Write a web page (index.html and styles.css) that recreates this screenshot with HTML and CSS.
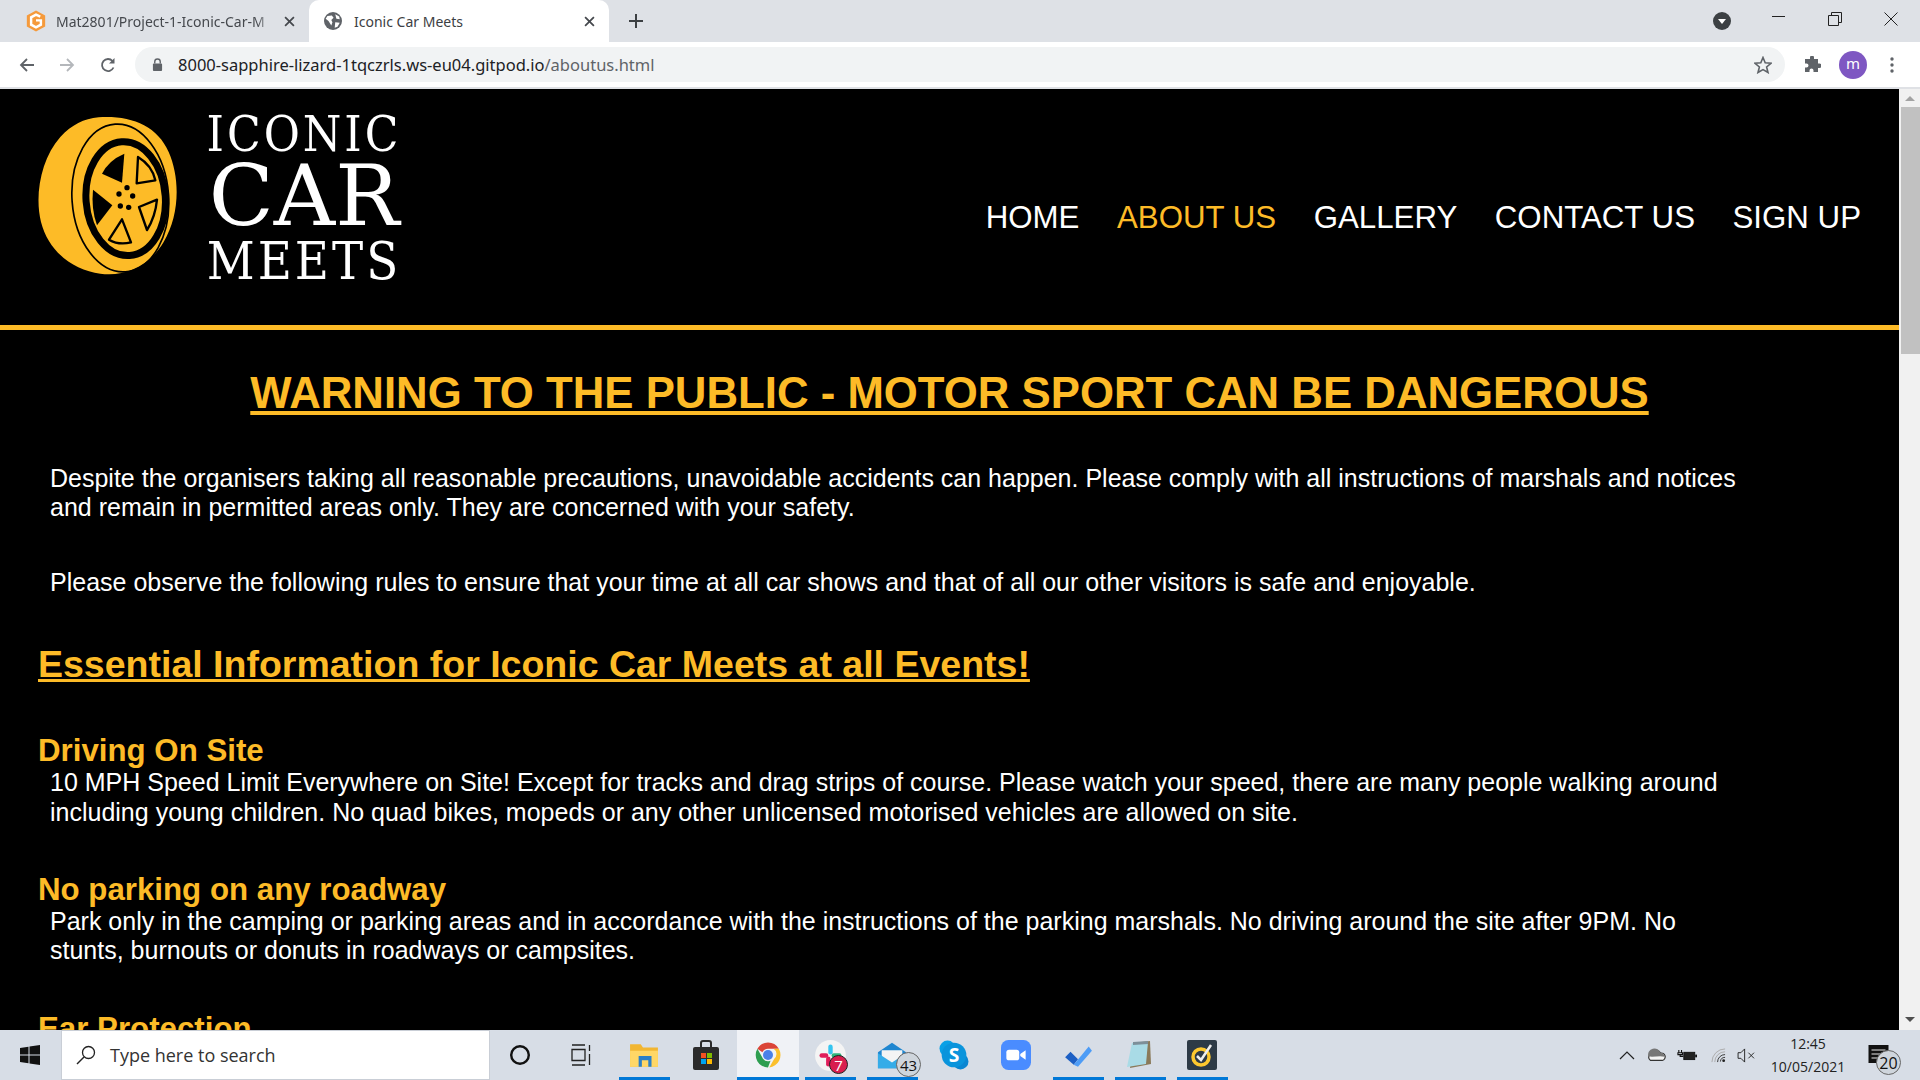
FILE: index.html
```html
<!DOCTYPE html>
<html lang="en">
  <head>
    <meta charset="UTF-8" />
    <meta name="viewport" content="width=device-width, initial-scale=1.0" />
    <title>Iconic Car Meets</title>
    <link rel="stylesheet" href="styles.css">
  </head>
  <body>
    <div class="tabstrip">
      <div class="tab">
        <svg class="favicon favicon-g" viewBox="0 0 16 18"><path d="M8 0.5 15.500 4.500V13.500L8 17.500 0.500 13.500V4.500Z" fill="#f59a3c"/><path d="M11.500 5.500 8 3.800 4 6V12L8 14.200 12 12V8.500H8" fill="none" stroke="#fff" stroke-width="2"/></svg>
        <span class="tab-title">Mat2801/Project-1-Iconic-Car-M</span>
        <svg class="tab-close" viewBox="0 0 10 10"><path d="M1 1 9 9M9 1 1 9" stroke="#45484d" stroke-width="1.6"/></svg>
      </div>
      <div class="tab tab-active">
        <svg class="favicon" viewBox="0 0 16 16"><circle cx="8" cy="8" r="8" fill="#5f6368"/><path d="M3 3.500 7 3 8.500 5 6.500 7 7.500 9 6.500 12 4 8 1.500 6ZM10 2 13.500 4 14 6.500 11 6ZM10 9 14 9.500 12 13 9.500 14Z" fill="#fff"/></svg>
        <span class="tab-title">Iconic Car Meets</span>
        <svg class="tab-close" viewBox="0 0 10 10"><path d="M1 1 9 9M9 1 1 9" stroke="#45484d" stroke-width="1.6"/></svg>
      </div>
      <svg class="new-tab" viewBox="0 0 14 14"><path d="M7 0V14M0 7H14" stroke="#3c4043" stroke-width="2"/></svg>
      <div class="strip-right">
        <svg class="tab-search" viewBox="0 0 18 18"><circle cx="9" cy="9" r="9" fill="#3c4043"/><path d="M5 7H13L9 12Z" fill="#fff"/></svg>
        <svg class="win-btn" viewBox="0 0 14 14"><path d="M0 4.500H13" stroke="#222" stroke-width="1"/></svg>
        <svg class="win-btn" viewBox="0 0 14 14"><path d="M.5 3.500H10.500V13.500H.5ZM3.500 3.500V.5H13.500V10.500H10.500" fill="none" stroke="#222"/></svg>
        <svg class="win-btn" viewBox="0 0 14 14"><path d="M.5 .5 13.500 13.500M13.500 .5 .5 13.500" stroke="#222"/></svg>
      </div>
    </div>

    <div class="toolbar">
      <svg class="tool-icon" viewBox="0 0 16 16"><path d="M15 8H2M8 2 2 8 8 14" fill="none" stroke="#5f6368" stroke-width="1.8"/></svg>
      <svg class="tool-icon" viewBox="0 0 16 16"><path d="M1 8H14M8 2 14 8 8 14" fill="none" stroke="#b4b7bb" stroke-width="1.8"/></svg>
      <svg class="tool-icon" viewBox="0 0 16 16"><path d="M13.500 10.500A6 6 0 1 1 12.500 4" fill="none" stroke="#5f6368" stroke-width="1.8"/><path d="M14.500 1V6.500H9Z" fill="#5f6368"/></svg>
      <div class="omnibox">
        <svg class="lock" viewBox="0 0 12 14"><path d="M3 6V4A3 3 0 0 1 9 4V6" fill="none" stroke="#5f6368" stroke-width="1.5"/><rect x="1" y="6" width="10" height="8" rx="1" fill="#5f6368"/></svg>
        <span class="url">8000-sapphire-lizard-1tqczrls.ws-eu04.gitpod.io<span class="url-path">/aboutus.html</span></span>
        <svg class="star" viewBox="0 0 18 18"><path d="M9 1.500 11.200 6.800 17 7.300 12.600 11 14 16.500 9 13.600 4 16.500 5.400 11 1 7.300 6.800 6.800Z" fill="none" stroke="#5f6368" stroke-width="1.6"/></svg>
      </div>
      <svg class="puzzle" viewBox="0 0 18 18"><path d="M7 1.500A2 2 0 0 1 11 1.500V3H15V7.500H16.500A2.200 2.200 0 0 1 16.500 12H15V16H10.500V14.500A2 2 0 0 0 6.500 14.500V16H2V11.500H3.500A2 2 0 0 0 3.500 7.500H2V3H7Z" fill="#5f6368"/></svg>
      <div class="avatar">m</div>
      <svg class="kebab" viewBox="0 0 4 16"><circle cx="2" cy="2" r="1.700" fill="#5f6368"/><circle cx="2" cy="8" r="1.700" fill="#5f6368"/><circle cx="2" cy="14" r="1.700" fill="#5f6368"/></svg>
    </div>

    <div class="viewport">
      <div class="page">
        <header class="site-header">
          <div class="logo">
            <svg class="wheel" viewBox="53 62 420 480">
              <path d="M235 66C330 60 410 90 445 170 480 250 478 360 430 440 385 515 310 545 240 535 160 525 85 470 62 380 42 300 62 190 120 125 155 88 190 70 235 66Z" fill="#fdbb27"/>
              <ellipse cx="300" cy="308" rx="145" ry="222" fill="none" stroke="#000" stroke-width="5" transform="rotate(-4 300 308)"/>
              <ellipse cx="316" cy="310" rx="119" ry="171" fill="none" stroke="#000" stroke-width="21" transform="rotate(-4 316 310)"/>
              <path d="M245 235Q265 195 312 175L305 262Z" fill="#000"/>
              <path d="M218 283 276 330 230 390Q212 340 218 283Z" fill="#000"/>
              <path d="M353 185Q395 210 405 255L349 264Z" fill="none" stroke="#000" stroke-width="7" stroke-linejoin="round"/>
              <path d="M356 335 410 313Q405 365 380 404Z" fill="none" stroke="#000" stroke-width="7" stroke-linejoin="round"/>
              <path d="M305 372 332 441Q295 450 266 433Z" fill="none" stroke="#000" stroke-width="7" stroke-linejoin="round"/>
              <circle cx="320" cy="277" r="8"/><circle cx="296" cy="296" r="8"/><circle cx="337" cy="302" r="8"/><circle cx="300" cy="332" r="8"/><circle cx="325" cy="336" r="8"/>
            </svg>
            <div class="wordmark">
              <span class="word-iconic">ICONIC</span>
              <span class="word-car">CAR</span>
              <span class="word-meets">MEETS</span>
            </div>
          </div>
          <nav class="site-nav">
            <a href="#">HOME</a>
            <a href="#" class="current">ABOUT US</a>
            <a href="#">GALLERY</a>
            <a href="#">CONTACT US</a>
            <a href="#">SIGN UP</a>
          </nav>
        </header>

        <main class="content">
          <h1>WARNING TO THE PUBLIC - MOTOR SPORT CAN BE DANGEROUS</h1>
          <p class="intro">Despite the organisers taking all reasonable precautions, unavoidable accidents can happen. Please comply with all instructions of marshals and notices and remain in permitted areas only. They are concerned with your safety.</p>
          <p class="intro">Please observe the following rules to ensure that your time at all car shows and that of all our other visitors is safe and enjoyable.</p>
          <h2>Essential Information for Iconic Car Meets at all Events!</h2>
          <h3>Driving On Site</h3>
          <p>10 MPH Speed Limit Everywhere on Site! Except for tracks and drag strips of course. Please watch your speed, there are many people walking around including young children. No quad bikes, mopeds or any other unlicensed motorised vehicles are allowed on site.</p>
          <h3>No parking on any roadway</h3>
          <p>Park only in the camping or parking areas and in accordance with the instructions of the parking marshals. No driving around the site after 9PM. No stunts, burnouts or donuts in roadways or campsites.</p>
          <h3>Ear Protection</h3>
        </main>
      </div>
      <div class="scrollbar">
        <span class="arrow-up"></span>
        <span class="thumb"></span>
        <span class="arrow-down"></span>
      </div>
    </div>

    <footer class="taskbar">
      <svg class="start" viewBox="0 0 20 20"><path d="M0 3 8.500 1.800V9.500H0ZM9.500 1.600 20 0V9.500H9.500ZM0 10.500H8.500V18.200L0 17ZM9.500 10.500H20V20L9.500 18.400Z" fill="#111"/></svg>
      <div class="searchbox">
        <svg class="search-glass" viewBox="0 0 20 20"><circle cx="12.500" cy="7.500" r="6" fill="none" stroke="#222" stroke-width="1.300"/><path d="M8 12 1 19" stroke="#222" stroke-width="1.500"/></svg>
        <span>Type here to search</span>
      </div>
      <div class="task-item"><svg class="glyph" viewBox="0 0 20 20"><circle cx="10" cy="10" r="8" fill="none" stroke="#111" stroke-width="2.200"/></svg></div>
      <div class="task-item"><svg class="glyph glyph-view" viewBox="0 0 22 22"><path d="M2 1H15M2 21H15M2 5.500H15V16.500H2ZM19.500 1V7M19.500 10V21" fill="none" stroke="#222" stroke-width="1.300"/></svg></div>
      <div class="task-item running">
        <svg class="app" viewBox="0 0 28 26"><path d="M1 3H11L13 6H27V24H1Z" fill="#f2b632"/><path d="M1 9H27V24H1Z" fill="#ffd766"/><path d="M9 14H21V24H18V18H12V24H9Z" fill="#2a7fc9"/></svg>
      </div>
      <div class="task-item">
        <svg class="app" viewBox="0 0 28 30"><path d="M9 8V3A2 2 0 0 1 11 1H17A2 2 0 0 1 19 3V8" fill="none" stroke="#2b2b2b" stroke-width="2"/><rect x="1" y="7" width="26" height="23" rx="2" fill="#2b2b2b"/><rect x="9" y="13" width="5" height="5" fill="#f25022"/><rect x="15" y="13" width="5" height="5" fill="#7fba00"/><rect x="9" y="19" width="5" height="5" fill="#00a4ef"/><rect x="15" y="19" width="5" height="5" fill="#ffb900"/></svg>
      </div>
      <div class="task-item active">
        <svg class="app" viewBox="0 0 48 48"><path d="M24 4A20 20 0 0 1 41.300 14H24A10 10 0 0 0 15 19.700L7 14A20 20 0 0 1 24 4Z" fill="#db4437"/><path d="M41.300 14A20 20 0 0 1 26 43.900L34 30A10 10 0 0 0 33 14Z" fill="#fbc02d"/><path d="M7 14 16 30A10 10 0 0 0 28 33L24 44A20 20 0 0 1 7 14Z" fill="#2e9e50"/><circle cx="24" cy="24" r="8" fill="#4a80e8"/></svg>
      </div>
      <div class="task-item running">
        <svg class="app app-slack" viewBox="0 0 30 30"><circle cx="15" cy="15" r="14" fill="#f4f4f4"/><rect x="13" y="5" width="4" height="9" rx="2" fill="#36c5f0"/><rect x="16" y="13" width="9" height="4" rx="2" fill="#2eb67d"/><rect x="5" y="13" width="8" height="4" rx="2" fill="#e01e5a"/><rect x="11" y="16" width="4" height="9" rx="2" fill="#e01e5a"/></svg>
        <span class="badge badge-red">7</span>
      </div>
      <div class="task-item running">
        <svg class="app" viewBox="0 0 32 30"><path d="M1 12 16 2 31 12V29H1Z" fill="#1f86d0"/><path d="M5 10H27V18L16 24 5 18Z" fill="#f4f4f4"/><path d="M1 13 16 23 31 13V29H1Z" fill="#35ace8"/></svg>
        <span class="badge badge-grey">43</span>
      </div>
      <div class="task-item">
        <svg class="app" viewBox="0 0 28 28"><circle cx="8" cy="8" r="7.500" fill="#0aa0e6"/><circle cx="20" cy="20" r="7.500" fill="#0a86d2"/><circle cx="14" cy="14" r="11.500" fill="#0a94dc"/><text x="14" y="20.500" class="skype-s">S</text></svg>
      </div>
      <div class="task-item">
        <svg class="app" viewBox="0 0 28 28"><rect width="28" height="28" rx="7" fill="#4a8cff"/><rect x="5" y="9" width="12" height="10" rx="2.500" fill="#fff"/><path d="M18 13 23 9.500V18.500L18 15Z" fill="#fff"/></svg>
      </div>
      <div class="task-item running">
        <svg class="app" viewBox="0 0 28 24"><path d="M2 14 7 9 14 16 10 21Z" fill="#1c5fc4"/><path d="M10 21 24 4 27 8 14 23Z" fill="#4d9cf6"/></svg>
      </div>
      <div class="task-item running">
        <svg class="app" viewBox="0 0 28 30"><path d="M7 3 24 1 25 24 4 28Z" fill="#8a7a5a"/><path d="M6 3 22 2 20 24 1 27Z" fill="#a9dbe6"/><path d="M7 2 22 1V4L7 5Z" fill="#7d8f99"/></svg>
      </div>
      <div class="task-item running">
        <svg class="app" viewBox="0 0 30 30"><rect width="30" height="30" rx="2" fill="#2d3a46"/><circle cx="14" cy="17" r="8" fill="none" stroke="#fdc82f" stroke-width="3.500"/><path d="M10 16 14 20 24 5" fill="none" stroke="#eee" stroke-width="2.500"/></svg>
      </div>
      <div class="tray">
        <svg class="tray-chevron" viewBox="0 0 16 9"><path d="M1 8 8 1 15 8" fill="none" stroke="#222" stroke-width="1.200"/></svg>
        <svg class="tray-cloud" viewBox="0 0 22 14"><path d="M5 13A4 4 0 0 1 5 6 6 6 0 0 1 16 5 4 4 0 0 1 18 13Z" fill="#f4f4f4" stroke="#333" stroke-width="1.300"/><path d="M2.500 8.500A6 6 0 0 1 16 5 4 4 0 0 1 20.500 9C14 7 9 10 2.500 8.500Z" fill="#777"/></svg>
        <svg class="tray-battery" viewBox="0 0 22 14"><path d="M2 1V4M5 1V4M1 4H6V6H1ZM3.500 6V8H7" fill="none" stroke="#111" stroke-width="1.200"/><rect x="7.500" y="3.500" width="12" height="8" fill="#222" stroke="#111"/><rect x="20" y="6" width="2" height="3" fill="#111"/></svg>
        <svg class="tray-wifi" viewBox="0 0 16 16"><path d="M1 15A14 14 0 0 1 15 1M4 15A11 11 0 0 1 15 4" fill="none" stroke="#aaa" stroke-width="1"/><path d="M7 15A8 8 0 0 1 15 7M10 14.500A5 5 0 0 1 15 10" fill="none" stroke="#333" stroke-width="1"/><circle cx="13.500" cy="13.500" r="1.500" fill="#222"/></svg>
        <svg class="tray-volume" viewBox="0 0 20 16"><path d="M1 5H4L8 1V15L4 11H1Z" fill="none" stroke="#222" stroke-width="1"/><path d="M12 5 18 11M18 5 12 11" stroke="#222" stroke-width="1"/></svg>
        <div class="clock"><span>12:45</span><span>10/05/2021</span></div>
        <div class="notify">
          <svg class="notify-icon" viewBox="0 0 20 18"><path d="M0 0H20V18H0Z" fill="#111"/><path d="M3 5H17M3 9H17M3 13H12" stroke="#e8e8e8" stroke-width="1"/></svg>
          <span class="badge badge-grey">20</span>
        </div>
      </div>
    </footer>
  </body>
</html>
```
FILE: styles.css
```css
* {
  padding: 0;
  margin: 0;
  box-sizing: border-box;
}

body {
  display: flex;
  flex-direction: column;
  width: 1920px;
  height: 1080px;
  overflow: hidden;
  font-family: "Liberation Sans", Arial, sans-serif;
  background-color: #000;
}

/* browser chrome */
.tabstrip {
  display: flex;
  align-items: flex-end;
  height: 42px;
  flex-shrink: 0;
  background-color: #dee1e6;
  font-family: "Noto Sans", sans-serif;
  font-size: 14px;
}

.tab {
  display: flex;
  align-items: center;
  width: 309px;
  height: 42px;
  padding: 0 14px 0 26px;
  color: #45484d;
}

.tab-active {
  width: 300px;
  padding: 0 14px 0 15px;
  border-radius: 10px 10px 0 0;
  background-color: #fff;
  color: #3c4043;
}

.favicon {
  width: 18px;
  height: 18px;
  flex-shrink: 0;
  margin-right: 12px;
}

.favicon-g {
  width: 20px;
  height: 22px;
  margin-right: 10px;
}

.tab-title {
  flex: 1;
  min-width: 0;
  overflow: hidden;
  white-space: nowrap;
}

.tab:first-child .tab-title {
  -webkit-mask-image: linear-gradient(90deg, #000 93%, transparent);
}

.tab-close {
  width: 11px;
  height: 11px;
  flex-shrink: 0;
  margin-left: 12px;
}

.new-tab {
  width: 14px;
  height: 14px;
  margin: 0 0 14px 20px;
}

.strip-right {
  display: flex;
  align-items: center;
  margin-left: auto;
  height: 42px;
}

.tab-search {
  width: 18px;
  height: 18px;
  margin-right: 41px;
}

.win-btn {
  width: 14px;
  height: 14px;
  margin-right: 42px;
  margin-bottom: 4px;
}

.win-btn:last-child {
  margin-right: 22px;
}

.toolbar {
  display: flex;
  align-items: center;
  height: 47px;
  flex-shrink: 0;
  padding: 0 13px 0 19px;
  border-bottom: 2px solid #dfe1e5;
  background-color: #fff;
}

.tool-icon {
  width: 16px;
  height: 16px;
  margin-right: 24px;
}

.tool-icon:nth-child(3) {
  margin-left: 1px;
  margin-right: 19px;
}

.omnibox {
  display: flex;
  align-items: center;
  width: 1650px;
  height: 35px;
  padding: 0 13px 0 17px;
  border-radius: 18px;
  background-color: #f1f3f4;
  font-family: "Noto Sans", sans-serif;
  font-size: 16.5px;
  color: #202124;
}

.lock {
  width: 11px;
  height: 13px;
  margin-right: 15px;
}

.url-path {
  color: #5f6368;
}

.star {
  width: 18px;
  height: 18px;
  margin-left: auto;
}

.puzzle {
  width: 18px;
  height: 18px;
  margin-left: 18px;
}

.avatar {
  display: flex;
  justify-content: center;
  align-items: center;
  width: 28px;
  height: 28px;
  margin-left: 18px;
  padding-bottom: 3px;
  border-radius: 50%;
  background-color: #7e57c2;
  color: #fff;
  font-family: "Noto Sans", sans-serif;
  font-size: 15px;
}

.kebab {
  width: 4px;
  height: 16px;
  margin-left: 23px;
}

/* page area */
.viewport {
  display: flex;
  flex: 1;
  min-height: 0;
}

.page {
  flex: 1;
  min-width: 0;
  overflow: hidden;
  background-color: #000;
  color: #fff;
}

.site-header {
  display: flex;
  justify-content: space-between;
  height: 241px;
  padding: 19px 38px 0;
  border-bottom: 5px solid #fdbb27;
}

.logo {
  display: flex;
  align-items: flex-start;
  gap: 31px;
}

.wheel {
  width: 140px;
  height: 160px;
  margin-top: 8px;
}

.wordmark {
  display: flex;
  flex-direction: column;
  align-items: center;
  width: 190px;
  margin-top: 2px;
  font-family: "DejaVu Serif Condensed", "DejaVu Serif", serif;
  color: #fff;
}

.wordmark span {
  display: block;
  white-space: nowrap;
}

.word-iconic {
  font-size: 49px;
  line-height: 50px;
  letter-spacing: 3px;
}

.word-car {
  font-family: "DejaVu Serif", serif;
  font-size: 85px;
  line-height: 72px;
}

.word-meets {
  margin-top: 2px;
  font-size: 52px;
  line-height: 54px;
  letter-spacing: 3px;
}

.site-nav {
  display: flex;
  gap: 37.5px;
  padding-top: 92px;
  font-size: 31.25px;
}

.site-nav a {
  color: #fff;
  text-decoration: none;
}

.site-nav a.current {
  color: #fdbb27;
}

.content {
  padding: 0 38px;
}

h1,
h2,
h3 {
  color: #fdbb27;
  font-weight: bold;
}

h1 {
  margin-top: 37px;
  font-size: 43.75px;
  line-height: 52px;
  text-align: center;
  text-decoration: underline;
}

h2 {
  margin-top: 45px;
  font-size: 37.5px;
  line-height: 44px;
  text-decoration: underline;
}

h3 {
  margin-top: 45px;
  font-size: 31.25px;
  line-height: 35px;
}

h2 + h3 {
  margin-top: 47px;
}

.content p {
  max-width: 1707px;
  padding-left: 12px;
  font-size: 25px;
  line-height: 29.4px;
}

.content .intro {
  margin-top: 45px;
}

/* scrollbar */
.scrollbar {
  display: flex;
  flex-direction: column;
  align-items: center;
  width: 21px;
  flex-shrink: 0;
  background-color: #f1f1f1;
}

.arrow-up,
.arrow-down {
  width: 0;
  height: 0;
  border-left: 5px solid transparent;
  border-right: 5px solid transparent;
}

.arrow-up {
  margin: 7px 0 6px;
  border-bottom: 5px solid #a3a3a3;
}

.thumb {
  width: 19px;
  height: 247px;
  margin-left: 2px;
  background-color: #c1c1c1;
}

.arrow-down {
  margin: auto 0 8px;
  border-top: 5px solid #505050;
}

/* windows taskbar */
.taskbar {
  display: flex;
  align-items: center;
  height: 50px;
  flex-shrink: 0;
  background-color: #d7dde6;
}

.start {
  width: 20px;
  height: 20px;
  margin: 0 21px 0 20px;
}

.searchbox {
  display: flex;
  align-items: center;
  gap: 14px;
  width: 429px;
  height: 50px;
  padding-left: 14px;
  margin-right: -1px;
  background-color: #fff;
  border: 1px solid #c9ced6;
  font-family: "Open Sans", sans-serif;
  font-size: 18px;
  color: #333;
}

.search-glass {
  width: 20px;
  height: 20px;
}

.task-item {
  position: relative;
  display: flex;
  justify-content: center;
  align-items: center;
  width: 62px;
  height: 50px;
  flex-shrink: 0;
}

.running::after {
  content: "";
  position: absolute;
  left: 6px;
  right: 5px;
  bottom: 0;
  height: 3px;
  background-color: #0078d7;
}

.active {
  background-color: #f0f2f6;
}

.active::after {
  content: "";
  position: absolute;
  left: 0;
  right: 0;
  bottom: 0;
  height: 3px;
  background-color: #0078d7;
}

.glyph {
  width: 22px;
  height: 22px;
}

.glyph-view {
  margin-right: 3px;
}

.app {
  width: 30px;
  height: 30px;
}

.app-slack {
  width: 33px;
  height: 33px;
}

.skype-s {
  fill: #fff;
  font-family: "Open Sans", sans-serif;
  font-weight: bold;
  font-size: 18px;
  text-anchor: middle;
}

.badge {
  position: absolute;
  display: flex;
  justify-content: center;
  align-items: center;
  border-radius: 50%;
  font-family: "Open Sans", sans-serif;
  font-size: 15px;
}

.badge-red {
  right: 13px;
  bottom: 6px;
  width: 19px;
  height: 19px;
  border: 1px solid #222;
  background-color: #d81e4e;
  color: #fff;
}

.badge-grey {
  right: 2px;
  bottom: 3px;
  width: 25px;
  height: 25px;
  border: 1px solid #666;
  background-color: #cfd5dc;
  color: #111;
}

.tray {
  display: flex;
  align-items: center;
  margin-left: auto;
}

.tray svg {
  flex-shrink: 0;
}

.tray-chevron {
  width: 16px;
  height: 9px;
  margin-right: 11px;
}

.tray-cloud {
  width: 20px;
  height: 14px;
  margin-right: 11px;
}

.tray-battery {
  width: 20px;
  height: 13px;
  margin-right: 14px;
}

.tray-wifi {
  width: 15px;
  height: 15px;
  margin-right: 11px;
}

.tray-volume {
  width: 19px;
  height: 15px;
  margin-right: 7px;
}

.clock {
  display: flex;
  flex-direction: column;
  align-items: center;
  gap: 5px;
  width: 90px;
  font-family: "Open Sans", sans-serif;
  font-size: 14px;
  line-height: 18px;
  color: #222;
}

.notify {
  position: relative;
  width: 52px;
  height: 50px;
  margin-left: 15px;
}

.notify-icon {
  position: absolute;
  left: 0;
  top: 15px;
  width: 21px;
  height: 18px;
}

.notify .badge-grey {
  right: 19px;
  bottom: 5px;
  font-size: 16px;
}
```
